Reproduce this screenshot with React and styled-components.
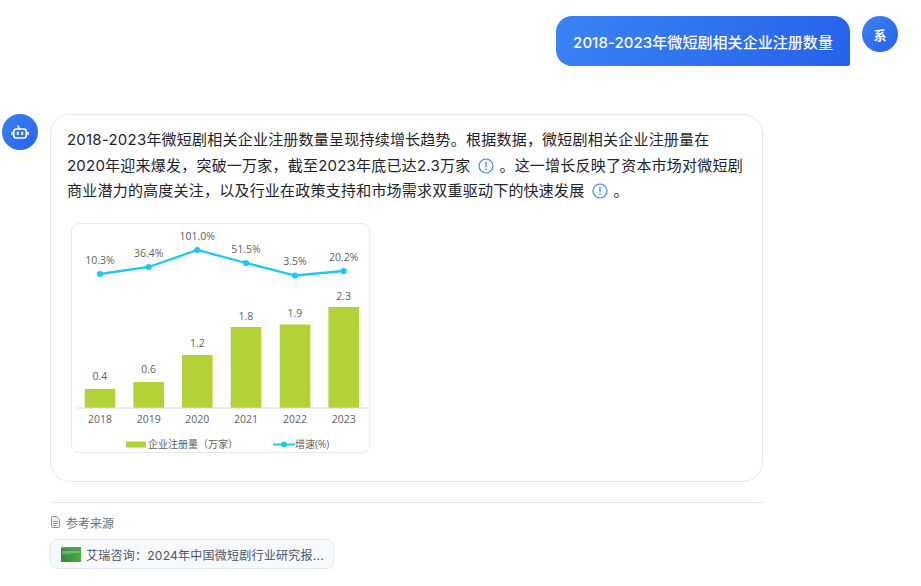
import styled, { createGlobalStyle } from "styled-components"

const GlobalStyle = createGlobalStyle`
html, body {
  margin: 0;
  background: #fff;
}
body {
  font-family: Inter, "Noto Sans CJK SC", sans-serif;
  color: #1f2329;
}
`

const Page = styled.div`
  width: 921px;
  height: 586px;
  overflow: hidden;
  padding: 16px 23px 0 2px;
  box-sizing: border-box;
`

const UserRow = styled.div`
  display: flex;
  justify-content: flex-end;
  align-items: flex-start;
  gap: 12px;
  margin-bottom: 48px;
`

const Bubble = styled.div`
  height: 50px;
  padding: 0 17px;
  box-sizing: border-box;
  display: flex;
  align-items: center;
  border-radius: 16px 16px 2px 16px;
  background: linear-gradient(120deg, #3b82f6, #2563eb);
  color: #fff;
  font-size: 15px;
  font-weight: 500;
  letter-spacing: 0.06px;
`

const Avatar = styled.div`
  width: 36px;
  height: 36px;
  flex: none;
  border-radius: 50%;
  display: flex;
  align-items: center;
  justify-content: center;
  background: linear-gradient(135deg, #3b82f6, #2563eb);
  color: #fff;
  font-size: 13px;
  font-weight: 700;
`

const BotRow = styled.div`
  display: flex;
  align-items: flex-start;
  gap: 12px;
`

const Content = styled.div`
  width: 713px;
`

const Card = styled.div`
  height: 368px;
  box-sizing: border-box;
  padding: 12px 16px 0;
  border: 1px solid #e2e8f0;
  border-radius: 20px;
`

const Answer = styled.p`
  margin: 0 0 19.5px;
  font-size: 15px;
  line-height: 25.5px;
  letter-spacing: 0.22px;
  color: #1f2329;
`

const Cite = styled.svg`
  width: 16px;
  height: 16px;
  margin: 0 5px 0 8px;
  vertical-align: -3px;
`

const ChartFrame = styled.div`
  width: 299px;
  height: 230px;
  margin-left: 4px;
  box-sizing: border-box;
  border: 1px solid #e5e9f2;
  border-radius: 8px;
  overflow: hidden;
`

const Sources = styled.div`
  margin-top: 20px;
  padding-top: 11px;
  border-top: 1px solid #e2e8f0;
`

const SourcesTitle = styled.div`
  display: flex;
  align-items: center;
  gap: 5px;
  height: 16px;
  margin-bottom: 9px;
  font-size: 12px;
  color: #6b7280;
`

const SourceChip = styled.div`
  width: 284px;
  height: 30px;
  box-sizing: border-box;
  padding: 0 10px;
  display: flex;
  align-items: center;
  gap: 5px;
  background: #f8f9fc;
  border: 1px solid #e2e8f0;
  border-radius: 7px;
  font-size: 12px;
  letter-spacing: 0.25px;
  color: #4b5563;
  white-space: nowrap;
`

const Thumb = styled.svg`
  width: 20px;
  height: 15px;
  flex: none;
`

const ChartLabel = styled.text`
  font-family: "Open Sans", "Noto Sans CJK SC", sans-serif;
  font-size: ${(p) => p.$size || 10.5}px;
  fill: #5f5f5f;
  text-anchor: ${(p) => p.$anchor || "middle"};
`

const bars = [
  { year: "2018", value: "0.4", x: 100, top: 165, labelY: 156 },
  { year: "2019", value: "0.6", x: 148.7, top: 158, labelY: 149 },
  { year: "2020", value: "1.2", x: 197.3, top: 131, labelY: 123 },
  { year: "2021", value: "1.8", x: 246, top: 103, labelY: 95.5 },
  { year: "2022", value: "1.9", x: 295, top: 100.5, labelY: 92.5 },
  { year: "2023", value: "2.3", x: 343.7, top: 83, labelY: 75.5 },
]

const growth = [
  { label: "10.3%", x: 100, y: 50, labelY: 39.5 },
  { label: "36.4%", x: 148.7, y: 43, labelY: 32.5 },
  { label: "101.0%", x: 197.3, y: 26, labelY: 15.5 },
  { label: "51.5%", x: 246, y: 39, labelY: 28.5 },
  { label: "3.5%", x: 295, y: 51.5, labelY: 40.5 },
  { label: "20.2%", x: 343.7, y: 47, labelY: 36.5 },
]

const GREEN = "#b2d235"
const CYAN = "#1fc8f0"

// x坐标按整页量的，这里减去图表框的72
const GrowthChart = () => (
  <svg width="297" height="228" viewBox="72 0 297 228">
    {growth.map((g) => (
      <ChartLabel key={g.label} x={g.x} y={g.labelY}>{g.label}</ChartLabel>
    ))}
    <polyline
      points={growth.map((g) => `${g.x},${g.y}`).join(" ")}
      fill="none"
      stroke={CYAN}
      strokeWidth="2.3"
    />
    {growth.map((g) => (
      <circle key={g.label} cx={g.x} cy={g.y} r="3.1" fill={CYAN} />
    ))}
    {bars.map((b) => (
      <g key={b.year}>
        <rect x={b.x - 15.3} y={b.top} width="30.6" height={184 - b.top} fill={GREEN} />
        <ChartLabel x={b.x} y={b.labelY}>{b.value}</ChartLabel>
        <ChartLabel x={b.x} y="199">{b.year}</ChartLabel>
      </g>
    ))}
    <line x1="76" x2="368" y1="184" y2="184" stroke="#d9d9d9" />
    <rect x="126" y="217.5" width="20" height="6" fill={GREEN} />
    <ChartLabel x="148" y="224" $anchor="start" $size={10}>企业注册量（万家）</ChartLabel>
    <line x1="273" x2="295" y1="220.5" y2="220.5" stroke={CYAN} strokeWidth="2" />
    <circle cx="284" cy="220.5" r="3" fill={CYAN} />
    <ChartLabel x="295" y="224" $anchor="start" $size={10}>增速(%)</ChartLabel>
  </svg>
)

const CiteIcon = () => (
  <Cite viewBox="0 0 16 16" fill="none" stroke="#3b82f6">
    <circle cx="8" cy="8" r="7" strokeWidth="1.2" />
    <line x1="8" y1="4.4" x2="8" y2="8.8" strokeWidth="1.3" strokeLinecap="round" />
    <line x1="8" y1="11" x2="8" y2="11.6" strokeWidth="1.4" strokeLinecap="round" />
  </Cite>
)

const BotIcon = () => (
  <svg width="18" height="18" viewBox="0 0 18 18" fill="none" stroke="#fff" strokeWidth="1.6">
    <rect x="2.8" y="6" width="12.4" height="9" rx="2.5" />
    <path d="M7 3 L8.5 6" strokeLinecap="round" />
    <path d="M1 9.5v2M17 9.5v2" strokeLinecap="round" />
    <rect x="5.8" y="8.7" width="2" height="3.4" fill="#fff" stroke="none" />
    <rect x="10.2" y="8.7" width="2" height="3.4" fill="#fff" stroke="none" />
  </svg>
)

const DocIcon = () => (
  <svg width="11" height="12" viewBox="0 0 11 12" fill="none" stroke="#8a8f99" strokeWidth="1">
    <path d="M1.5 1.5a1 1 0 0 1 1-1h4l3 3v7a1 1 0 0 1-1 1h-6a1 1 0 0 1-1-1z" fill="#eef0f3" />
    <path d="M3.2 5.5h4.6M3.2 7.5h4.6M3.2 9.5h3" />
  </svg>
)

const ReportThumb = () => (
  <Thumb viewBox="0 0 20 15">
    <defs>
      <linearGradient id="thumbGreen" x1="0" y1="0" x2="1" y2="0">
        <stop offset="0" stopColor="#2e8b3d" />
        <stop offset="1" stopColor="#4caf3f" />
      </linearGradient>
    </defs>
    <rect width="20" height="15" fill="url(#thumbGreen)" />
    <rect width="20" height="2" fill="#5a9a62" />
    <rect x="1" y="4.5" width="17" height="1" fill="#a5d8a0" />
    <rect x="1" y="6.5" width="9" height="0.8" fill="#7fc47b" />
  </Thumb>
)

const App = () => {
  return (
    <Page>
      <GlobalStyle />
      <UserRow>
        <Bubble>2018-2023年微短剧相关企业注册数量</Bubble>
        <Avatar>系</Avatar>
      </UserRow>
      <BotRow>
        <Avatar><BotIcon /></Avatar>
        <Content>
          <Card>
            <Answer>
              2018-2023年微短剧相关企业注册数量呈现持续增长趋势。根据数据，微短剧相关企业注册量在<br />
              2020年迎来爆发，突破一万家，截至2023年底已达2.3万家<CiteIcon />。这一增长反映了资本市场对微短剧<br />
              商业潜力的高度关注，以及行业在政策支持和市场需求双重驱动下的快速发展<CiteIcon />。
            </Answer>
            <ChartFrame><GrowthChart /></ChartFrame>
          </Card>
          <Sources>
            <SourcesTitle><DocIcon />参考来源</SourcesTitle>
            <SourceChip>
              <ReportThumb />
              艾瑞咨询：2024年中国微短剧行业研究报...
            </SourceChip>
          </Sources>
        </Content>
      </BotRow>
    </Page>
  )
}

export default App
